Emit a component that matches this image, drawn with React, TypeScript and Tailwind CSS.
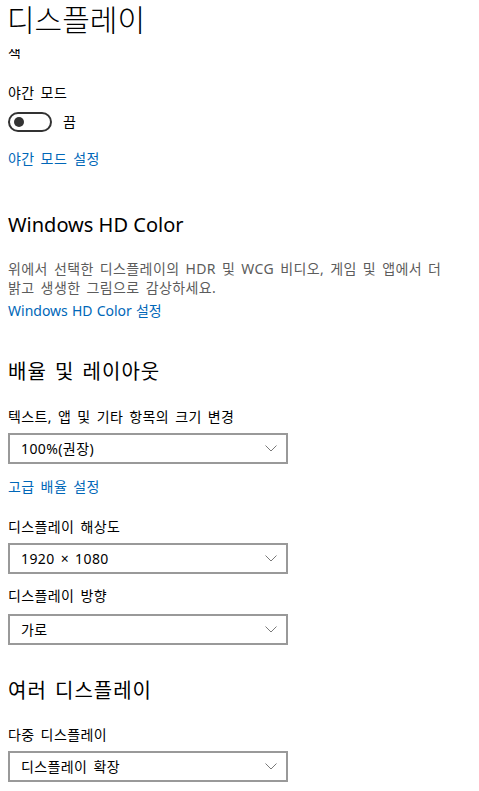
import React from "react";

const FONT = { fontFamily: '"Noto Sans", "Noto Sans CJK KR", sans-serif' };

function Chevron() {
  return (
    <svg width="12" height="7" viewBox="0 0 12 7" className="shrink-0">
      <path d="M0.5 0.5 L6 6 L11.5 0.5" fill="none" stroke="#7a7a7a" strokeWidth="1" />
    </svg>
  );
}

function Dropdown({ value, className }: { value: string; className?: string }) {
  return (
    <div
      className={
        "w-[280px] h-[31px] border-2 border-[#999999] bg-white flex items-center justify-between pl-[11px] pr-[9px] " +
        (className ?? "")
      }
    >
      <span className="text-[14px] leading-[20px] text-black tracking-[0.4px] [word-spacing:2px]">{value}</span>
      <Chevron />
    </div>
  );
}

function Label({ children, className }: { children: React.ReactNode; className?: string }) {
  return (
    <div className={"text-[14px] leading-[20px] text-black tracking-[0.4px] [word-spacing:2px] " + (className ?? "")}>
      {children}
    </div>
  );
}

function Link({ children, className }: { children: React.ReactNode; className?: string }) {
  return <div className={"text-[14px] leading-[20px] text-[#0067b8] " + (className ?? "")}>{children}</div>;
}

function Heading({ children, className }: { children: React.ReactNode; className?: string }) {
  return <div className={"text-[20px] leading-[28px] text-black " + (className ?? "")}>{children}</div>;
}

export default function App() {
  return (
    <div style={FONT} className="w-[479px] h-[791px] bg-white overflow-hidden pl-[8px] relative">
      <div className="h-[49px] -ml-[8px] pl-[7px] bg-white">
        <div className="text-[30px] leading-[40px] font-light text-black">디스플레이</div>
      </div>
      <div className="h-[10px] overflow-hidden">
        <div className="text-[14px] leading-[20px] -mt-[6px] text-black">색</div>
      </div>
      <Label className="mt-[24px]">야간 모드</Label>
      <div className="mt-[9px] flex items-center h-[20px]">
        <div className="w-[44px] h-[20px] rounded-full border-2 border-[#333333] flex items-center pl-[4px]">
          <div className="w-[10px] h-[10px] rounded-full bg-[#333333]" />
        </div>
        <span className="ml-[11px] text-[14px] leading-[20px] text-black">끔</span>
      </div>
      <Link className="mt-[17px] tracking-[0.4px] [word-spacing:2px]">야간 모드 설정</Link>

      <Heading className="mt-[42px]">Windows HD Color</Heading>
      <div className="mt-[20px] text-[14px] leading-[19px] text-[#5c5c5c] tracking-[0.4px] [word-spacing:2px]">
        위에서 선택한 디스플레이의 HDR 및 WCG 비디오, 게임 및 앱에서 더
        <br />
        밝고 생생한 그림으로 감상하세요.
      </div>
      <Link className="mt-[4px] [word-spacing:0.5px]">Windows HD Color 설정</Link>

      <Heading className="mt-[37px] tracking-[1px] [word-spacing:2px]">배율 및 레이아웃</Heading>
      <Label className="mt-[21px]">텍스트, 앱 및 기타 항목의 크기 변경</Label>
      <Dropdown value="100%(권장)" className="mt-[6px]" />
      <Link className="mt-[13px] tracking-[0.4px] [word-spacing:2px]">고급 배율 설정</Link>
      <Label className="mt-[20px]">디스플레이 해상도</Label>
      <Dropdown value="1920 × 1080" className="mt-[6px]" />
      <Label className="mt-[12px]">디스플레이 방향</Label>
      <Dropdown value="가로" className="mt-[8px]" />

      <Heading className="mt-[32px] tracking-[1px] [word-spacing:2px]">여러 디스플레이</Heading>
      <Label className="mt-[20px]">다중 디스플레이</Label>
      <Dropdown value="디스플레이 확장" className="mt-[6px]" />
    </div>
  );
}
